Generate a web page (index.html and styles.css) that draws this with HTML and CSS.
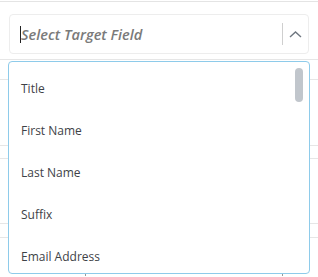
FILE: index.html
```html
<!DOCTYPE html>
<html lang="en">
<head>
    <meta charset="UTF-8">
    <meta name="viewport" content="width=device-width, initial-scale=1.0">
    <title>Field Mapping</title>
    <link rel="stylesheet" href="styles.css">
</head>
<body>
    <div class="page">
        <div class="top-line"></div>

        <div class="select-field">
            <span class="caret"></span>
            <span class="placeholder">Select Target Field</span>
            <span class="divider"></span>
            <svg class="chevron" width="13" height="7" viewBox="0 0 13 7">
                <polyline points="1,6 6.5,1 12,6" fill="none" stroke="#6f7780" stroke-width="1.4"/>
            </svg>
        </div>

        <!-- table rows behind the open dropdown -->
        <div class="bg-table">
            <div class="bg-row r1"></div>
            <div class="bg-row r2"></div>
            <div class="bg-row r3"></div>
            <div class="bg-row r4"></div>
            <div class="bg-row r5"></div>
            <div class="bg-row r6"></div>
            <div class="bg-ticks">
                <span class="tick t1"></span>
                <span class="tick t2"></span>
            </div>
        </div>

        <div class="dropdown">
            <ul class="options">
                <li>Title</li>
                <li>First Name</li>
                <li>Last Name</li>
                <li>Suffix</li>
                <li>Email Address</li>
            </ul>
            <div class="scroll-thumb"></div>
        </div>
    </div>
</body>
</html>
```

FILE: styles.css
```css
body {
    margin: 0;
    font-family: "Open Sans", Arial, sans-serif;
    background: #fff;
}
.page {
    position: relative;
    width: 318px;
    height: 277px;
    overflow: hidden;
}
.top-line {
    margin-top: 1px;
    border-top: 1px solid #e4e4e4;
}
.select-field {
    display: flex;
    align-items: center;
    height: 38px;
    margin: 12px 9px 0 9px;
    padding-left: 10px;
    border: 1px solid #ededed;
    border-radius: 4px;
}
.caret {
    width: 1px;
    height: 17px;
    background: #222;
}
.placeholder {
    flex: 1;
    font-size: 14.6px;
    font-style: italic;
    font-weight: 600;
    color: #7a7a7a;
}
.divider {
    width: 1px;
    height: 22px;
    background: #cfcfcf;
    margin-right: 6px;
}
.chevron {
    margin-right: 6px;
}
.bg-table {
    margin-top: 5px;
}
.bg-row {
    border-bottom: 1px solid #e6e6e6;
}
.r1 { height: 0; }
.r2 { height: 19px; }
.r3 { height: 65px; }
.r4 { height: 12px; }
.r5 { height: 64px; }
.r6 { height: 13px; }
.bg-ticks {
    position: relative;
    height: 38px;
}
.tick {
    position: absolute;
    bottom: 0;
    width: 1px;
    height: 4px;
    background: #9a9a9a;
}
.t1 { left: 85px; }
.t2 { left: 282px; }
.dropdown {
    position: absolute;
    left: 8px;
    top: 61px;
    width: 300px;
    height: 211px;
    border: 1px solid #8ecbea;
    border-radius: 4px;
    background: #fff;
    overflow: hidden;
}
.options {
    list-style: none;
    margin: 0;
    padding: 6px 0 0 0;
}
.options li {
    height: 42px;
    line-height: 42px;
    padding-left: 12px;
    font-size: 12px;
    color: #3e4247;
}
.scroll-thumb {
    position: absolute;
    top: 6px;
    right: 6px;
    width: 8px;
    height: 34px;
    border-radius: 4px;
    background: #c1c6cc;
}
```
